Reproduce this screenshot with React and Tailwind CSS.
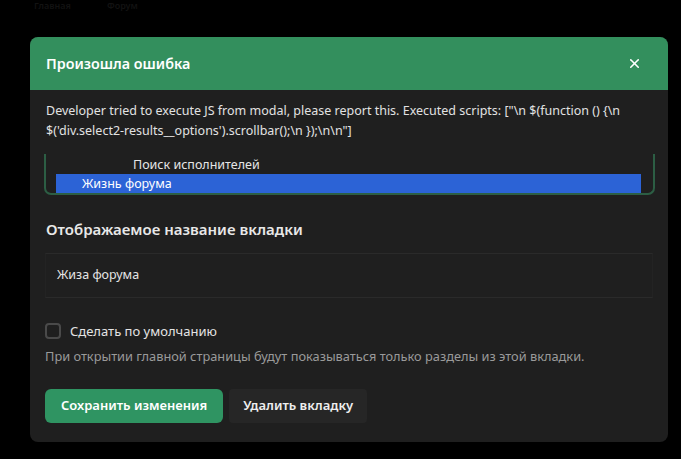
import React from "react";
import { X } from "lucide-react";

const errorLine1 = 'Developer tried to execute JS from modal, please report this. Executed scripts: ["\\n $(function () {\\n';
const errorLine2 = "$('div.select2-results__options').scrollbar();\\n });\\n\\n\"]";

const App = () => {
  return (
    <div
      className="w-[681px] h-[459px] bg-black overflow-hidden relative"
      style={{ fontFamily: '"Noto Sans", "Open Sans", sans-serif' }}
    >
      {/* faint page behind the overlay */}
      <div className="h-[12px] flex items-start gap-[36px] pl-[34px] text-[9px] leading-[12px] font-semibold text-[#121212]">
        <span>Главная</span>
        <span>Форум</span>
      </div>

      <div className="ml-[30px] mt-[25px] w-[638px] rounded-lg bg-[#1f1f1f] overflow-hidden">
        <div className="h-[53px] bg-[#338f5d] flex items-center justify-between pl-[16px] pr-[26px]">
          <h2 className="text-[14.3px] font-semibold text-white">Произошла ошибка</h2>
          <X size={15} strokeWidth={2.6} className="text-white" />
        </div>

        <div className="px-[15px] pt-[11px] pb-[19px]">
          <p className="text-[12.5px] leading-[20px] text-[#e2e2e2] px-[1px]">
            {errorLine1}
            <br />
            {errorLine2}
          </p>

          <div className="mt-[13px] h-[41px] mx-[-1px] w-[611px] border-x-2 border-b-2 border-[#2c5e44] rounded-b-[7px] pt-[2px] pl-[10px] pr-[12px]">
            <div className="h-[18px] pl-[77px] text-[12.5px] leading-[18px] text-[#e6e6e6]">Поиск исполнителей</div>
            <div className="h-[19px] bg-[#2c63d6] pl-[26px] text-[12.5px] leading-[19px] text-white">Жизнь форума</div>
          </div>

          <h3 className="mt-[23px] text-[15px] font-semibold text-[#e8e8e8] px-[1px]">
            Отображаемое название вкладки
          </h3>

          <div className="mt-[12px] h-[45px] w-[608px] border-y border-[#2a2a2a] border-x border-x-[#232323] flex items-center px-[11px] text-[12.5px] text-[#e4e4e4]">
            Жиза форума
          </div>

          <label className="mt-[24px] flex items-center gap-[9px]">
            <span className="w-[16px] h-[16px] rounded-[4px] border-2 border-[#4a4a4a] bg-[#1f1f1f]" />
            <span className="text-[13px] text-[#e4e4e4]">Сделать по умолчанию</span>
          </label>

          <p className="mt-[6px] text-[12.8px] text-[#9a9a9a]">
            При открытии главной страницы будут показываться только разделы из этой вкладки.
          </p>

          <div className="mt-[23px] flex gap-[6px]">
            <button className="h-[34px] px-[16px] rounded-[6px] bg-[#2f9462] text-[13px] font-semibold text-white">
              Сохранить изменения
            </button>
            <button className="h-[34px] px-[14px] rounded-[4px] bg-[#262626] text-[13px] font-semibold text-[#eeeeee]">
              Удалить вкладку
            </button>
          </div>
        </div>
      </div>
    </div>
  );
};

export default App;
